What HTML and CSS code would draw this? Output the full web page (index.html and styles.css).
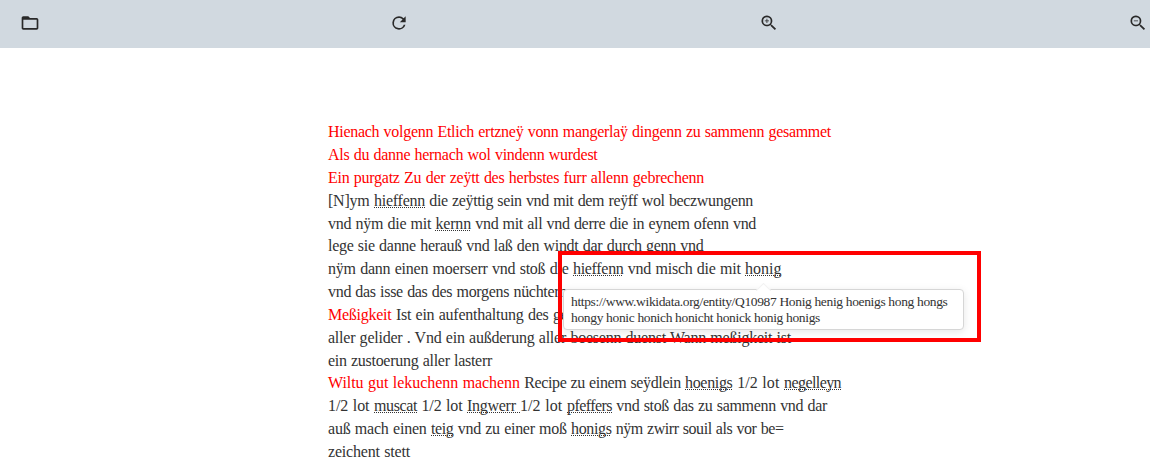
FILE: index.html
```html
<!DOCTYPE html>
<html lang="de">
<head>
<meta charset="utf-8">
<title>Transkription</title>
<link rel="stylesheet" href="styles.css">
</head>
<body>
<header class="toolbar">
<svg class="icon" viewBox="0 0 24 24"><path d="M20 6h-8l-2-2H4c-1.100 0-2 .9-2 2v12c0 1.100.9 2 2 2h16c1.100 0 2-.9 2-2V8c0-1.100-.9-2-2-2zm0 12H4V8h16v10z"/></svg>
<svg class="icon" viewBox="0 0 24 24"><path d="M17.650 6.350A7.960 7.960 0 0 0 12 4a8 8 0 1 0 7.730 10h-2.080A6 6 0 1 1 12 6c1.660 0 3.140.69 4.220 1.780L13 11h7V4l-2.350 2.350z"/></svg>
<svg class="icon" viewBox="0 0 24 24"><path d="M15.500 14h-.79l-.28-.27A6.500 6.500 0 1 0 13.730 14.430l.27.28v.79l5 4.990L20.490 19l-4.990-5zm-6 0a4.500 4.500 0 1 1 0-9 4.500 4.500 0 0 1 0 9zM12 10h-2v2H9v-2H7V9h2V7h1v2h2v1z"/></svg>
<svg class="icon" viewBox="0 0 24 24"><path d="M15.500 14h-.79l-.28-.27A6.500 6.500 0 1 0 13.730 14.430l.27.28v.79l5 4.990L20.490 19l-4.990-5zm-6 0a4.500 4.500 0 1 1 0-9 4.500 4.500 0 0 1 0 9zM7 9h5v1H7z"/></svg>
</header>
<main class="page">
<div class="line"><span class="red" data-w="503">Hienach volgenn Etlich ertzneÿ vonn mangerlaÿ dingenn zu sammenn gesammet</span></div>
<div class="line"><span class="red" data-w="269.500">Als du danne hernach wol vindenn wurdest</span></div>
<div class="line"><span class="red" data-w="376">Ein purgatz Zu der zeÿtt des herbstes furr allenn gebrechenn</span></div>
<div class="line"><span data-w="46">[N]ym </span><span class="term" data-w="51">hieffenn</span><span data-w="328"> die zeÿttig sein vnd mit dem reÿff wol beczwungenn</span></div>
<div class="line"><span data-w="107.500">vnd nÿm die mit </span><span class="term" data-w="35.500">kernn</span><span data-w="285"> vnd mit all vnd derre die in eynem ofenn vnd</span></div>
<div class="line"><span data-w="375.500">lege sie danne herauß vnd laß den windt dar durch genn vnd</span></div>
<div class="line"><span data-w="245">nÿm dann einen moerserr vnd stoß die </span><span class="term" data-w="50.500">hieffenn</span><span data-w="121.500"> vnd misch die mit </span><span class="term" data-w="36.500">honig</span></div>
<div class="line"><span data-w="239">vnd das isse das des morgens nüchtern</span></div>
<div class="line"><span class="red" data-w="63.500">Meßigkeit</span><span data-w="176"> Ist ein aufenthaltung des ge</span></div>
<div class="line"><span data-w="463">aller gelider . Vnd ein außderung aller boesenn duenst Wann meßigkeit ist</span></div>
<div class="line"><span data-w="164">ein zustoerung aller lasterr</span></div>
<div class="line"><span class="red" data-w="192">Wiltu gut lekuchenn machenn</span><span data-w="165"> Recipe zu einem seÿdlein </span><span class="term" data-w="47.500">hoenigs</span><span data-w="51.500"> 1/2 lot </span><span class="term" data-w="57">negelleyn</span></div>
<div class="line"><span data-w="46">1/2 lot </span><span class="term" data-w="43">muscat</span><span data-w="50"> 1/2 lot </span><span class="term" data-w="53">Ingwerr </span><span data-w="47">1/2 lot </span><span class="term" data-w="45">pfeffers</span><span data-w="215"> vnd stoß das zu sammenn vnd dar</span></div>
<div class="line"><span data-w="103">auß mach einen </span><span class="term" data-w="22.500">teig</span><span data-w="117.500"> vnd zu einer moß </span><span class="term" data-w="40.500">honigs</span><span data-w="172"> nÿm zwirr souil als vor be=</span></div>
<div class="line"><span data-w="82">zeichent stett</span></div>
</main>
<div class="tooltip"><div class="tipline"><span data-w="376.500">https://www.wikidata.org/entity/Q10987 Honig henig hoenigs hong hongs</span></div><div class="tipline"><span data-w="249">hongy honic honich honicht honick honig honigs</span></div></div>
<div class="frame"></div>
<script src="fit.js"></script>
</body>
</html>
```
FILE: styles.css
```css
* { box-sizing: border-box; }
body {
  margin: 0;
  height: 461px;
  overflow: hidden;
  position: relative;
  background: #fff;
  color: #333;
  font-family: "Liberation Serif", serif;
}
.toolbar {
  display: flex;
  justify-content: space-between;
  align-items: center;
  height: 48px;
  padding: 0 2px 3px 20px;
  background: #d1d9e0;
}
.icon { width: 20px; height: 20px; fill: #292929; }
.page {
  padding: 73.200px 0 0 328px;
  font-size: 16px;
  line-height: 22.857px;
  word-spacing: .6px;
}
.line, .tipline { white-space: pre; height: 22.857px; }
.red { color: #f00; }
.term {
  text-decoration: underline dotted 1px;
  text-underline-offset: 1px;
  text-decoration-skip-ink: none;
}
.tooltip {
  position: absolute;
  left: 563px;
  top: 289px;
  width: 401px;
  height: 41px;
  padding: 4px 7px;
  background: #fff;
  border: 1px solid #d6d6d6;
  border-radius: 4px;
  box-shadow: 0 2px 8px rgba(0, 0, 0, .1);
  font-size: 13.500px;
}
.tooltip::before {
  content: "";
  position: absolute;
  left: 194px;
  top: -5px;
  width: 10px;
  height: 10px;
  background: #fff;
  border: solid #f2f2f2;
  border-width: 1px 0 0 1px;
  transform: rotate(45deg);
}
.tipline { position: relative; height: 16px; line-height: 16px; }
.frame {
  position: absolute;
  left: 558px;
  top: 251px;
  width: 423px;
  height: 91px;
  border: 4px solid #f00;
}
```
FILE: fit.js
```js
document.querySelectorAll("[data-w]").forEach(function (run) {
  var natural = run.getBoundingClientRect().width;
  var gap = (Number(run.dataset.w) - natural) / run.textContent.length;
  run.style.letterSpacing = gap + "px";
});
```
